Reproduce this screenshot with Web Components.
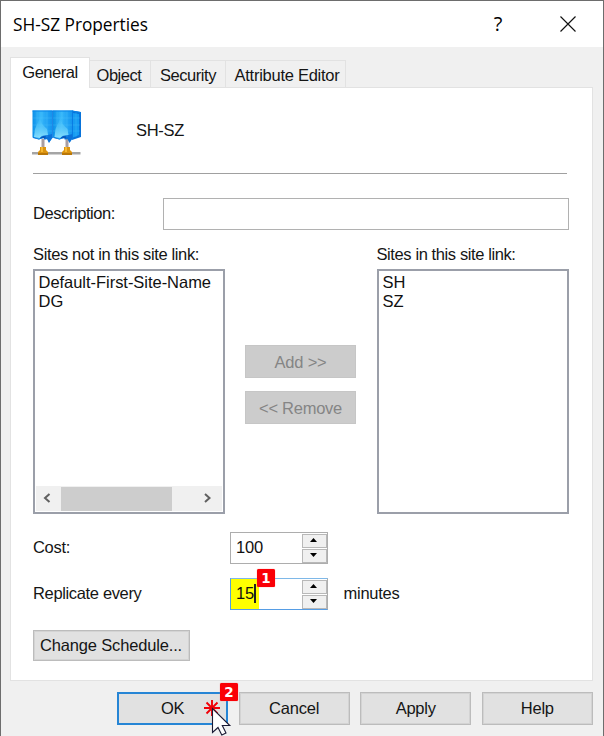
<!DOCTYPE html>
<html lang="en">
<head>
<meta charset="utf-8">
<title>SH-SZ Properties</title>
<style>
html,body{margin:0;height:736px;overflow:hidden;background:#f0f0f0}
body{font:16.5px/20px "Liberation Sans",Arial,sans-serif;color:#151515}
</style>
</head>
<body>
<property-dialog></property-dialog>
<script>
const define = (name, css, html, ready) => customElements.define(name, class extends HTMLElement {
  connectedCallback() {
    if (this.shadowRoot) return;
    const root = this.attachShadow({mode: 'open'});
    root.innerHTML = `<style>*{box-sizing:border-box}${css}</style>${typeof html === 'function' ? html(this) : html}`;
    if (ready) ready(this, root);
  }
});

// A one-line label whose tracking is adjusted so that it takes exactly "w" pixels.
define('fit-text', ':host{display:inline-block;white-space:pre}span{display:inline-block}', el => `<span>${el.getAttribute('text').replace(/</g, '&lt;')}</span>`, (el, root) => {
  const s = root.querySelector('span'), w = +el.getAttribute('w');
  const n = el.getAttribute('text').length;
  if (w) s.style.letterSpacing = ((w - s.getBoundingClientRect().width) / n) + 'px';
});

define('title-bar', `
  :host{display:flex;height:46px;background:#fff;align-items:center;padding-left:12px;color:#000;font:17.3px/24px "Open Sans","Noto Sans",sans-serif}
  fit-text{flex:1;padding-top:1px}
  .q{width:20px;text-align:center;font-size:20px;margin-right:52px;padding-top:0}
  svg{margin-right:27px;display:block}`,
  `<fit-text text="SH-SZ Properties" w="135"></fit-text><span class="q">?</span>
   <svg width="16" height="16"><path d="M.5.5l15 15M15.5.5l-15 15" stroke="#111" stroke-width="1.15"/></svg>`);

define('tab-item', `
  :host{display:flex;height:27px;border:1px solid #e2e2e2;border-left:0;border-bottom:0;justify-content:center;align-items:center;padding-top:1px;flex:none}
  :host([active]){height:31px;background:#fff;border-left:1px solid #e2e2e2;margin-bottom:-1px;position:relative;padding:0 0 2px}`, '<slot></slot>');

define('push-button', `
  :host{display:flex;align-items:center;justify-content:center;height:33px;background:#e1e1e1;border:1px solid #bcbcbc;box-shadow:inset 0 0 0 1px #d3d3d3}
  :host([disabled]){background:#ccc;border-color:#c6c6c6;box-shadow:none;color:#858585}
  :host([default]){border:2px solid #2685d5;box-shadow:none}`, '<slot></slot>');

define('list-box', `
  :host{display:flex;flex-direction:column;width:192px;height:245px;border:2px solid #9b9fa9;background:#fff;padding:2px 1px 1px 1px;line-height:19px;color:#111}
  .items{flex:1;display:flex;flex-direction:column;padding-left:2.500px}`, '<div class="items"><slot></slot></div><slot name="bar"></slot>');

define('scroll-bar', `
  :host{display:grid;grid-template-columns:25px 111px 50px;height:25px;background:#f0f0f0;align-items:center}
  i{background:#cdcdcd;height:24px}svg{display:block;margin:-2px 0 0 7px}svg:last-child{margin-left:31px}`,
  `<svg width="9" height="10"><path d="M6.5 1L2 5l4.500 4" fill="none" stroke="#606060" stroke-width="2"/></svg><i></i>
   <svg width="9" height="10"><path d="M2 1l4.500 4L2 9" fill="none" stroke="#606060" stroke-width="2"/></svg>`);

define('number-spinner', `
  :host{display:grid;grid-template-columns:71px 25px;width:98px;height:32px;border:1px solid #adadad;background:#fff;position:relative}
  :host([focused]){border-color:#7eb8e8 #adadad #569de5 #4f9fe3}
  .v{display:flex;align-items:center;padding:0 0 3px 5px;color:#111}
  .mark{display:flex;align-items:center;background:#ff0;height:30px;margin-left:-5px;width:28px;padding:0 0 2px 5px;margin-bottom:-3px}
  .mark i{width:1.500px;height:19px;background:#222}
  .b{display:grid;grid-template-rows:14px 14px;gap:1px;padding-top:1px}
  .b span{border:1px solid #b8b8b8;background:#f0f0f0;display:flex;align-items:center;justify-content:center;padding:0 2px 2px 0}
  svg{display:block}`,
  el => `<div class="v">${el.hasAttribute('focused') ? `<div class="mark"><fit-text text="${el.getAttribute('value')}" w="18"></fit-text><i></i></div>` : `<fit-text text="${el.getAttribute('value')}" w="27"></fit-text>`}</div>
   <div class="b"><span><svg width="7" height="4"><path d="M0 4L3.500 0l3.500 4z"/></svg></span><span><svg width="7" height="4"><path d="M0 0h7L3.500 4z"/></svg></span></div><slot></slot>`);

define('step-badge', `
  :host{display:flex;position:absolute;width:18px;height:18px;border-radius:1.500px;background:#fa0006;color:#fff;align-items:center;justify-content:center;font:bold 13.5px/18px "DejaVu Sans","Noto Sans",sans-serif;box-shadow:0 0 1px #f55;z-index:2}`, '<slot></slot>');

define('site-link-icon', ':host{display:block;width:50px;height:48px;margin-left:-1px}svg{display:block}', `
  <svg width="50" height="48" viewBox="0 0 50 48">
    <defs>
      <linearGradient id="a" x1="0" y1="0" x2="1" y2="0"><stop stop-color="#0b8fe8"/><stop offset=".4" stop-color="#36b7fa"/><stop offset="1" stop-color="#1192ee"/></linearGradient>
      <linearGradient id="f" x1="0" y1="0" x2="0" y2="1"><stop stop-color="#4cc4fa" stop-opacity=".2"/><stop offset="1" stop-color="#8be0fd"/></linearGradient>
      <g id="body">
        <path d="M.5 1.500h20V29l-3.500 4.500-1.500-3.500-2.500.5v-2l-6 2-6.500-2z" fill="url(#a)"/>
        <path d="M8 9l2 6 5 5 1 6-6 1-2 2-6-1 1-8z" fill="url(#f)"/>
        <path d="M1 28l6 2 3-3 6-1 4-1v4l-3 5-2-4-3 .5v-2l-5 2-6-1.500z" fill="#0b72da"/>
        <path d="M8 29l3-2 3 .5-1 2z" fill="#0658bd"/>
      </g>
    </defs>
    <path d="M0 43h48.500v2.500H0z" fill="#a5a5a5"/>
    <path d="M9.500 30h3v10h-3zm24 0h3v10h-3z" fill="#a99ea1"/>
    <path d="M40 1.500l9 1.500v25l-9 3z" fill="#0873da"/>
    <path d="M41 4l6 1v21l-6 2.500z" fill="#169cf2"/>
    <use href="#body"/><use href="#body" x="20.500"/>
    <path d="M1 9h47M1 16h47M1 22h47M5 2v26M10 2v26M15 2v26M25 2v26M30 2v26M35 2v26M44 3v25" stroke="#67d3ff" stroke-width=".6" opacity=".4"/>
    <path d="M.5 2H40l8.500 1.500" fill="none" stroke="#0883e7"/>
    <path d="M20.500 2v27M40.500 2v28" stroke="#0876df" stroke-width=".8"/>
    <path d="M8 38h6v3l2 2v3H6v-3l2-2zm24 0h6v3l2 2v3H30v-3l2-2z" fill="#dc9410"/>
    <path d="M6 44h10v2H6zm24 0h10v2H30z" fill="#b97708"/>
    <path d="M9 38h2v5H9zm24 0h2v5h-2z" fill="#f7b932"/>
  </svg>`);

define('click-pointer', ':host{position:absolute;display:block;width:30px;height:38px;z-index:3}svg{display:block}', `
  <svg width="30" height="38" viewBox="0 0 30 38">
    <path d="M8 0v16M0 8h16M2.500 2.500l11 11M13.500 2.500l-11 11" stroke="#f00008" stroke-width="1.900"/>
    <path d="M8.500 8.500v24l5.500-5 3.800 7.500 4.200-2-3.700-7.500h7.500z" fill="#fff" stroke="#1b1b35" stroke-width="1.100"/>
  </svg>`);

define('general-page', `
  :host{display:grid;grid-template-rows:86px 24px 32px 12px 23px 4px 245px 18px 32px 14px 32px 20px 31px;width:583px;height:594px;border:1px solid #e2e2e2;background:#fff;padding-left:22px;align-content:start}
  .head{display:flex;padding-top:21px;border-bottom:1px solid #a0a0a0;width:534px}
  .head fit-text{margin:11px 0 0 54px}
  .row{display:flex;align-items:center}
  .desc{grid-row:3}.labels{grid-row:5}.lists{grid-row:7}.cost{grid-row:9}.rep{grid-row:11}.sch{grid-row:13}
  .field{width:406px;height:32px;border:1px solid #b1b1b1}
  .k{width:130px}.lists{display:flex}
  .desc .k{margin-top:-2px}
  .mid{width:152px;padding:76px 21px 0 20px;display:flex;flex-direction:column;gap:13px}
  .cost .k,.rep .k{width:197px;margin-top:-2px}
  .rep>.m{margin:-2px 0 0 15.500px}
  .sch push-button{width:157px;height:31px;padding:0 1px 1px 0}
  step-badge{left:26px;top:-10px}`, `
  <div class="head"><site-link-icon></site-link-icon><fit-text text="SH-SZ" w="48"></fit-text></div>
  <div class="row desc"><div class="k"><fit-text text="Description:" w="82"></fit-text></div><div class="field"></div></div>
  <div class="row labels"><div style="width:343.500px"><fit-text text="Sites not in this site link:" w="166"></fit-text></div><fit-text text="Sites in this site link:" w="139"></fit-text></div>
  <div class="lists">
    <list-box><fit-text text="Default-First-Site-Name" w="172.5"></fit-text><fit-text text="DG"></fit-text><scroll-bar slot="bar"></scroll-bar></list-box>
    <div class="mid"><push-button disabled><fit-text text="Add >>" w="52"></fit-text></push-button><push-button disabled><fit-text text="<< Remove" w="83"></fit-text></push-button></div>
    <list-box><fit-text text="SH"></fit-text><fit-text text="SZ"></fit-text></list-box>
  </div>
  <div class="row cost"><div class="k"><fit-text text="Cost:" w="37"></fit-text></div><number-spinner value="100"></number-spinner></div>
  <div class="row rep"><div class="k"><fit-text text="Replicate every" w="108.5"></fit-text></div><number-spinner focused value="15"><step-badge>1</step-badge></number-spinner><fit-text class="m" text="minutes" w="56"></fit-text></div>
  <div class="sch"><push-button><fit-text text="Change Schedule..." w="142"></fit-text></push-button></div>`);

define('property-dialog', `
  :host{box-sizing:border-box;display:flex;flex-direction:column;width:604px;height:736px;border:1px solid #6d6d6d;border-bottom:0;background:#f0f0f0}
  .tabs{display:flex;height:40px;align-items:flex-end;padding-left:9px;flex:none}
  general-page{box-sizing:border-box;margin-left:9px;flex:none}
  .foot{display:grid;grid-template-columns:repeat(4,111px);gap:10.600px;padding:11px 0 0 116px}
  .foot push-button{padding-bottom:1px}
  .ok{position:relative}
  step-badge{left:103px;top:-9px}click-pointer{left:87px;top:8px}`, `
  <title-bar></title-bar>
  <div class="tabs">
    <tab-item active style="width:80px"><fit-text text="General" w="55.5"></fit-text></tab-item>
    <tab-item style="width:61px;padding-right:2px"><fit-text text="Object" w="45"></fit-text></tab-item>
    <tab-item style="width:75px"><fit-text text="Security" w="56"></fit-text></tab-item>
    <tab-item style="width:120px;padding-left:3px"><fit-text text="Attribute Editor" w="105"></fit-text></tab-item>
  </div>
  <general-page></general-page>
  <div class="foot">
    <div class="ok"><push-button default><fit-text text="OK" w="23"></fit-text></push-button><step-badge>2</step-badge><click-pointer></click-pointer></div>
    <push-button><fit-text text="Cancel" w="50"></fit-text></push-button>
    <push-button><fit-text text="Apply" w="40"></fit-text></push-button>
    <push-button><fit-text text="Help" w="33"></fit-text></push-button>
  </div>`);
</script>
</body>
</html>
